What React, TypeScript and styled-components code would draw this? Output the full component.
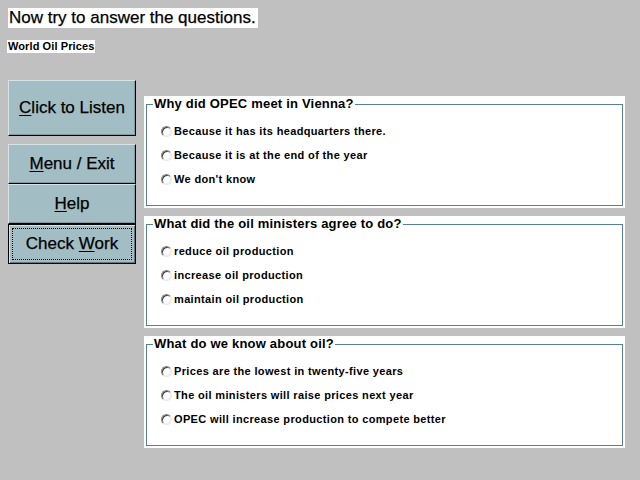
import styled, { createGlobalStyle } from "styled-components";

const GlobalStyle = createGlobalStyle`
    html, body {
        margin: 0;
        padding: 0;
        background: #c0c0c0;
        font-family: "Liberation Sans", Arial, sans-serif;
    }
`;

const Page = styled.div`
    width: 640px;
    height: 480px;
    box-sizing: border-box;
    padding: 8px 0 0 8px;
    display: flex;
    flex-direction: column;
    overflow: hidden;
`;

const Title = styled.h1`
    align-self: flex-start;
    margin: 0;
    background: #ffffff;
    color: #000000;
    font-size: 17px;
    font-weight: normal;
    line-height: 20px;
    -webkit-text-stroke: 0.25px #000000;
    padding: 0 2px 0 1px;
`;

const Subtitle = styled.h2`
    align-self: flex-start;
    margin: 12px 0 0 -1px;
    background: #ffffff;
    color: #000000;
    font-size: 11px;
    font-weight: bold;
    letter-spacing: 0.1px;
    line-height: 13px;
    padding: 0 1px;
`;

const Main = styled.div`
    display: flex;
    gap: 8px;
    margin-top: 27px;
`;

const Sidebar = styled.div`
    width: 128px;
    display: flex;
    flex-direction: column;
`;

const NavButton = styled.button<{ $tall?: boolean; $focused?: boolean }>`
    box-sizing: border-box;
    width: 128px;
    height: ${(p) => (p.$tall ? "56px" : "40px")};
    margin-bottom: ${(p) => (p.$tall ? "8px" : "0")};
    background: #a3bdc4;
    color: #000000;
    font-family: "Liberation Sans", Arial, sans-serif;
    font-size: 17px;
    -webkit-text-stroke: 0.25px #000000;
    padding: 0;
    border-style: solid;
    border-width: 1px;
    border-color: ${(p) => (p.$focused ? "#000000" : "#d6e3e6 #000000 #000000 #d6e3e6")};
    box-shadow: ${(p) =>
        p.$focused
            ? "inset 1px 1px 0 #d6e3e6, inset -1px -1px 0 #5d7880"
            : "inset -1px -1px 0 #7f9aa1"};
    outline: ${(p) => (p.$focused ? "1px dotted #000000" : "none")};
    outline-offset: -5px;
    cursor: pointer;
    & u {
        text-decoration-thickness: 1px;
        text-underline-offset: 2px;
    }
`;

const Panels = styled.div`
    margin-top: 16px;
    width: 481px;
    display: flex;
    flex-direction: column;
    gap: 8px;
`;

const Panel = styled.div`
    background: #ffffff;
    height: 112px;
    box-sizing: border-box;
    padding: 0 2px 2px 2px;
    display: flex;
`;

const Group = styled.fieldset`
    flex: 1;
    margin: 0;
    padding: 0 0 0 6px;
    border: 1px solid #58809a;
    min-width: 0;
`;

const Legend = styled.legend`
    padding: 0 1px;
    font-size: 13px;
    font-weight: bold;
    letter-spacing: 0.2px;
    line-height: 16px;
    color: #000000;
`;

const Options = styled.div`
    display: flex;
    flex-direction: column;
    padding: 7px 0 0 8px;
`;

const Option = styled.label`
    display: flex;
    align-items: center;
    gap: 2px;
    height: 24px;
    font-size: 11px;
    font-weight: bold;
    letter-spacing: 0.35px;
    color: #000000;
    cursor: pointer;
`;

const Radio = styled.span`
    box-sizing: border-box;
    width: 11px;
    height: 11px;
    border-radius: 50%;
    background: #ffffff;
    border: 1px solid;
    border-color: #808080 #e8e8e8 #e8e8e8 #808080;
    box-shadow: inset 1px 1px 0 #404040, inset -1px -1px 0 #f0f0f0;
    flex-shrink: 0;
`;

const questions = [
    {
        q: "Why did OPEC meet in Vienna?",
        a: [
            "Because it has its headquarters there.",
            "Because it is at the end of the year",
            "We don't know",
        ],
    },
    {
        q: "What did the oil ministers agree to do?",
        a: ["reduce oil production", "increase oil production", "maintain oil production"],
    },
    {
        q: "What do we know about oil?",
        a: [
            "Prices are the lowest in twenty-five years",
            "The oil ministers will raise prices next year",
            "OPEC will increase production to compete better",
        ],
    },
];

export default function App() {
    return (
        <>
            <GlobalStyle />
            <Page>
                <Title>Now try to answer the questions.</Title>
                <Subtitle>World Oil Prices</Subtitle>
                <Main>
                    <Sidebar>
                        <NavButton $tall>
                            <u>C</u>lick to Listen
                        </NavButton>
                        <NavButton>
                            <u>M</u>enu / Exit
                        </NavButton>
                        <NavButton>
                            <u>H</u>elp
                        </NavButton>
                        <NavButton $focused>
                            Check <u>W</u>ork
                        </NavButton>
                    </Sidebar>
                    <Panels>
                        {questions.map((item) => (
                            <Panel key={item.q}>
                                <Group>
                                    <Legend>{item.q}</Legend>
                                    <Options>
                                        {item.a.map((ans) => (
                                            <Option key={ans}>
                                                <Radio />
                                                {ans}
                                            </Option>
                                        ))}
                                    </Options>
                                </Group>
                            </Panel>
                        ))}
                    </Panels>
                </Main>
            </Page>
        </>
    );
}
